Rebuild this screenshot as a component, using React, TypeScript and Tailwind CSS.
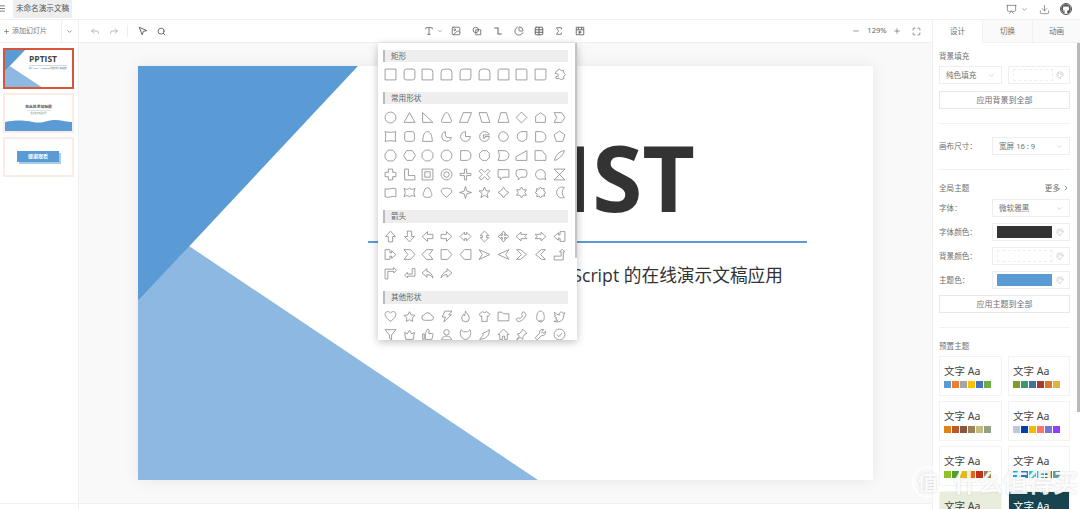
import React from 'react';
import {
  Menu, Plus, ChevronDown, ChevronRight, Reply, Forward, Search, Type, Image, ChartPie, Table, Sigma,
  Minus, Maximize, Palette, Presentation, Download,
} from 'lucide-react';
import { FaGithub } from 'react-icons/fa';

const rectShapes = [
  'M2 2h20v20H2z',
  'M6 2h12a4 4 0 0 1 4 4v12a4 4 0 0 1-4 4H6a4 4 0 0 1-4-4V6a4 4 0 0 1 4-4z',
  'M2 2h14a6 6 0 0 1 6 6v14H2z',
  'M8 2h8a6 6 0 0 1 6 6v14H2V8a6 6 0 0 1 6-6z',
  'M7 2h15v15a5 5 0 0 1-5 5H2V7a5 5 0 0 1 5-5z',
  'M8 2h8a6 6 0 0 1 6 6v14H2V8a6 6 0 0 1 6-6z',
  'M5 2h17v20H2V5a3 3 0 0 1 3-3z',
  'M2 2h17a3 3 0 0 1 3 3v17H2z',
  'M2 2h20v17a3 3 0 0 1-3 3H2z',
  'M7 5l5-3 3 3 4-1 1 5 3 3-3 3 0 5-6 1-3-2-5 1-1-4 5-1-1-4-5-1z',
];

const commonShapes = [
  'M12 2a10 10 0 1 0 0 20a10 10 0 1 0 0-20z',
  'M12 3l10 18H2z',
  'M3 3l19 18H3z',
  'M12 3c2 0 3 1 4 3l5 11c1 3 0 4-3 4H6c-3 0-4-1-3-4L8 6c1-2 2-3 4-3z',
  'M8 3h15l-7 18H1z',
  'M2 3h14l6 18H7z',
  'M7 3h10l5 18H2z',
  'M12 2l10 10-10 10L2 12z',
  'M12 3l9 7v11H3V10z',
  'M2 3h14l6 9-6 9H2l5-9z',

  'M2 3c3 1.500 17 1.500 20 0c-1.500 4-1.500 14 0 18c-3-1.500-17-1.500-20 0c1.500-4 1.500-14 0-18z',
  'M7 3h10a4 4 0 0 1 4 4v10a4 4 0 0 1-4 4H7a4 4 0 0 1-4-4V7a4 4 0 0 1 4-4z',
  'M12 3c6 0 8 6 9 18H3c1-12 3-18 9-18z',
  'M10 3a9 9 0 1 0 11 11h-6c-3 0-5-2-5-5z',
  'M12 3a9 9 0 1 0 9 9h-9z',
  'M12 3a9 9 0 1 0 9 9h-8v3h-3v-6h11a9 9 0 0 0-9-6z',
  'M12 3l6 3 3 6a9 9 0 1 1-9-9z',
  'M22 3v10a9 9 0 1 1-9-10z',
  'M3 3h9a10 10 0 0 1 10 10a9 9 0 0 1-9 9H3z',
  'M12 2l10 7-4 12H6L2 9z',

  'M8 2h8l6 7v7l-5 6H7l-5-6V9z',
  'M7 3h10l6 9-6 9H7l-6-9z',
  'M8 2h8l6 6v8l-6 6H8l-6-6V8z',
  'M12 2a10 10 0 1 0 0 20a10 10 0 1 0 0-20z',
  'M3 3h11a8 8 0 0 1 8 8v2a8 8 0 0 1-8 8H3z',
  'M8 3h8l5 5v8l-5 5H8l-5-5V8z',
  'M2 3h11c5 0 9 4 9 9s-4 9-9 9H2c3-5 3-13 0-18z',
  'M22 3v18H2v-7z',
  'M2 3l13 0 7 9v9H2z',
  'M3 21c0-8 10-18 18-18c0 6-12 18-18 18z',

  'M8 2h8v6h6v8h-6v6H8v-6H2V8h6z',
  'M3 2h7v12h12v8H3z',
  'M2 2h20v20H2zM7 7v10h10V7z',
  'M12 2a10 10 0 1 0 0 20a10 10 0 1 0 0-20zM12 7a5 5 0 1 0 0 10a5 5 0 1 0 0-10z',
  'M10 2h4v8h8v4h-8v8h-4v-8H2v-4h8z',
  'M6 2l6 6 6-6 4 4-6 6 6 6-4 4-6-6-6 6-4-4 6-6-6-6z',
  'M2 3h20v14H11l-5 5v-5H2z',
  'M7 3h10a5 5 0 0 1 5 5v4a5 5 0 0 1-5 5h-6l-5 5v-5a5 5 0 0 1-4-5V8a5 5 0 0 1 5-5z',
  'M12 3a9 9 0 1 0 4 17l6 1-2-5a9 9 0 0 0-8-13z',
  'M2 2h20L2 22h20z',

  'M2 5c6 3 14-3 20 0v15c-6-3-14 3-20 0z',
  'M2 4c3 3 6 3 10 0c4 3 7 3 10 0l-2 8 2 8c-3-3-6-3-10 0c-4-3-7-3-10 0l2-8z',
  'M12 3c4 0 5 4 7 9c2 4 2 9-7 9s-9-5-7-9c2-5 3-9 7-9z',
  'M12 21C6 16 2 12 2 9c0-3 4-5 10-5s10 2 10 5c0 3-4 7-10 12z',
  'M12 1l2.500 8.500L23 12l-8.500 2.500L12 23l-2.500-8.500L1 12l8.500-2.500z',
  'M12 2l3 7h7l-5.500 5 2 7.500L12 17l-6.500 4.500 2-7.500L2 9h7z',
  'M12 2l4 6 6 4-6 4-4 6-4-6-6-4 6-4z',
  'M12 2l3 5h6l-3 5 3 5h-6l-3 5-3-5H3l3-5-3-5h6z',
  'M12 2l2.500 3.500 4.500-1 -1 4.500L22 12l-3.500 2.500 1 4.500-4.500-1L12 22l-2.500-3.500-4.500 1 1-4.500L2 12l3.500-2.500-1-4.500 4.500 1z',
  'M21 3a10 10 0 1 0 0 18a12 12 0 0 1 0-18z',
];

const arrowShapes = [
  'M12 2l9 10h-5v10H8V12H3z',
  'M8 2h8v10h5l-9 10-9-10h5z',
  'M2 12l10-9v5h10v8H12v5z',
  'M22 12L12 3v5H2v8h10v5z',
  'M2 12l8-8v4h4V4l8 8-8 8v-4h-4v4z',
  'M12 2l8 8h-4v4h4l-8 8-8-8h4v-4H4z',
  'M12 2l4 5h-2v3h3V8l5 4-5 4v-2h-3v3h2l-4 5-4-5h2v-3H7v2l-5-4 5-4v2h3V7H8z',
  'M2 12l9-8v4h11l-4 4 4 4H11v4z',
  'M22 12l-9-8v4H2l4 4-4 4h11v4z',
  'M2 12l8-7v4h3V3h9v18h-9v-6h-3v4z',

  'M22 12l-8 7v-4h-3v6H2V3h9v6h3V5z',
  'M2 3h12l8 9-8 9H2l7-9z',
  'M22 3H10l-8 9 8 9h12l-7-9z',
  'M2 3h12l8 9-8 9H2z',
  'M22 3H10l-8 9 8 9h12z',
  'M2 3l20 9-20 9 6-9z',
  'M22 3L2 12l20 9-6-9z',
  'M3 3h7l11 9-11 9H3l9-9z',
  'M21 3h-7L3 12l11 9h7l-9-9z',
  'M2 22v-7h13V7h-3l5-5 5 5h-3v15z',

  'M2 22V4h16V1l5 5-5 5V8H7v14z',
  'M22 3v14H8v3l-5-5 5-5v3h9V3z',
  'M11 3L2 11l9 8v-5c5 0 8 2 11 6c-1-6-5-11-11-12z',
  'M13 3l9 8-9 8v-5c-5 0-8 2-11 6c1-6 5-11 11-12z',
];

const otherShapes = [
  'M12 21C5 16 2 12 2 8c0-3 2-5 5-5c2 0 4 1 5 3c1-2 3-3 5-3c3 0 5 2 5 5c0 4-3 8-10 13z',
  'M12 3l3 6 7 1-5 5 1 6-6-3-6 3 1-6-5-5 7-1z',
  'M7 19a5 5 0 0 1-1-10a7 7 0 0 1 13 1a4.500 4.500 0 0 1-1 9z',
  'M9 2h13l-6 7h5L7 22l3-9H4z',
  'M12 2c1 4 7 7 7 13a7 7 0 0 1-14 0c0-3 2-5 3-7c1 1 2 2 2 3c1-3 2-6 2-9z',
  'M8 3l4 2 4-2 6 5-3 4-2-1v10H7V11l-2 1-3-4z',
  'M2 4h7l3 3h10v13H2z',
  'M15 3l4 3c3 3-1 9-5 12-4 3-8 5-10 2l-2-3 5-3 2 2c2-1 4-3 5-6l-2-2z',
  'M12 2c5 0 7 6 7 12c0 5-3 8-7 8s-7-3-7-8c0-6 2-12 7-12zM9 20l6 0',
  'M22 5c-1 1-2 1-3 1c-1-2-3-3-5-2c-2 1-3 3-2 5c-4 0-7-2-9-5c-1 3 0 5 2 7l-2 0c0 2 2 4 4 4l-2 1c1 2 3 3 4 3c-2 1-4 2-7 2c8 3 18 0 18-12z',

  'M2 3h20l-8 10v9l-4-3v-6z',
  'M3 8l5 3 4-7 4 7 5-3-2 13H5z',
  'M8 10l4-8c2 0 3 1 3 3l-1 5h7c1 0 2 2 1 3l-2 8H8zM3 11h3v10H3z',
  'M12 3a5 5 0 1 0 0 10a5 5 0 1 0 0-10zM3 22c0-5 4-7 9-7s9 2 9 7z',
  'M4 3l4 4h8l4-4c2 4 2 7 1 10c-1 5-5 8-9 8s-8-3-9-8c-1-3-1-6 1-10z',
  'M21 3c0 9-4 15-12 17l-6 1 4-5c1-2 2-2 3-4l-2-2c4-1 8-3 13-7z',
  'M12 2L2 12h3v9h5v-6h4v6h5v-9h3z',
  'M14 2l8 8-3 1-4 5-1 5-4-4-7 5 5-7-4-4 5-1 4-5z',
  'M21 6l-4 4-3-3 4-4a6 6 0 0 0-8 7L2 18l4 4 8-8a6 6 0 0 0 7-8z',
  'M12 2a10 10 0 1 0 0 20a10 10 0 1 0 0-20zM7 12l4 4 6-7',
];

const themes = [
  { bg: 'bg-white', text: 'text-[#444444]', colors: ['#5b9bd5', '#ed7d31', '#a5a5a5', '#ffc000', '#4472c4', '#70ad47'] },
  { bg: 'bg-white', text: 'text-[#444444]', colors: ['#83992a', '#3c9670', '#44709d', '#a23b32', '#d87728', '#deb340'] },
  { bg: 'bg-white', text: 'text-[#444444]', colors: ['#e48312', '#bd582c', '#865640', '#9b8357', '#c2bc80', '#94a088'] },
  { bg: 'bg-white', text: 'text-[#444444]', colors: ['#bdc8df', '#003fa9', '#f5ba00', '#ff7567', '#7676d9', '#923ffc'] },
  { bg: 'bg-white', text: 'text-[#444444]', colors: ['#90c226', '#54a021', '#e6b91e', '#e76618', '#c42f19', '#918655'] },
  { bg: 'bg-white', text: 'text-[#444444]', colors: ['#1cade4', '#2683c6', '#27ced7', '#42ba97', '#3e8853', '#62a39f'] },
  { bg: 'bg-[#e9eddc]', text: 'text-[#444444]', colors: [] },
  { bg: 'bg-[#17444e]', text: 'text-white', colors: [] },
];

function ShapeGrid({ shapes }: { shapes: string[] }) {
  return (
    <div className="grid grid-cols-[repeat(10,18.8px)] auto-rows-[18.8px] ml-[2.9px]">
      {shapes.map((d, i) => (
        <div key={i} className="flex items-center justify-center">
          <svg viewBox="0 0 24 24" className="w-[13px] h-[13px]" fill="none" stroke="#8a8a8a" strokeWidth={1.5} strokeLinejoin="round">
            <path d={d} />
          </svg>
        </div>
      ))}
    </div>
  );
}

function ShapeTitle({ title, className }: { title: string; className: string }) {
  return (
    <div className={`ml-[5px] w-[185px] h-[12.5px] bg-[#eeeeee] border-l-2 border-[#bbbbbb] pl-[6px] text-[7.6px] leading-[12.5px] text-[#666666] ${className}`}>
      {title}
    </div>
  );
}

function ShapePanel() {
  return (
    <div className="absolute left-[299px] top-[23px] w-[199px] h-[297px] bg-white overflow-hidden pt-[6.5px] shadow-[0_2px_8px_rgba(0,0,0,0.25)] z-10">
      <ShapeTitle title="矩形" className="" />
      <div className="mt-[3px]"><ShapeGrid shapes={rectShapes} /></div>
      <ShapeTitle title="常用形状" className="mt-[8px]" />
      <div className="mt-[4px]"><ShapeGrid shapes={commonShapes} /></div>
      <ShapeTitle title="箭头" className="mt-[8px]" />
      <div className="mt-[4px]"><ShapeGrid shapes={arrowShapes} /></div>
      <ShapeTitle title="其他形状" className="mt-[8px]" />
      <div className="mt-[3px]"><ShapeGrid shapes={otherShapes} /></div>
      <div className="absolute right-0 top-0 w-[2.5px] h-[215px] bg-[#c4c4c4]" />
    </div>
  );
}

function Slide() {
  return (
    <div className="relative w-[735px] h-[414px] bg-white shadow-[0_0_15px_rgba(0,0,0,0.08)] overflow-hidden">
      <svg viewBox="0 0 735 414" className="absolute inset-0 w-full h-full">
        <polygon points="51,180 400,414 0,414 0,235" fill="#8cb8e2" />
        <polygon points="0,0 220,0 0,235" fill="#5b9bd5" />
      </svg>
      <div className="absolute right-[178px] top-[57px] text-[91px] leading-[1.2] font-bold text-[#333333] font-['Open_Sans',sans-serif] whitespace-nowrap">PPTIST</div>
      <div className="absolute left-[230px] top-[174.500px] w-[439px] h-[2px] bg-[#5b9bd5]" />
      <div className="absolute right-[90px] top-[196px] text-[17.700px] leading-[26px] text-[#333333] font-['Open_Sans','Noto_Sans_CJK_SC',sans-serif] whitespace-nowrap">基于 Vue 3.x + TypeScript 的在线演示文稿应用</div>
    </div>
  );
}

function Thumbnails() {
  return (
    <div className="flex flex-col gap-[4px] pl-[3px] pt-[5px]">
      <div className="relative w-[71px] h-[41px] border-2 border-[#d9553a] overflow-hidden bg-white">
        <svg viewBox="0 0 735 414" preserveAspectRatio="none" className="absolute inset-0 w-full h-full">
          <polygon points="51,180 400,414 0,414 0,235" fill="#8cb8e2" />
          <polygon points="0,0 220,0 0,235" fill="#5b9bd5" />
        </svg>
        <div className="absolute left-[24px] top-[3px] text-[8.500px] leading-[11px] font-bold text-[#444444] font-['Open_Sans',sans-serif]">PPTIST</div>
        <div className="absolute left-[24px] top-[15px] w-[38px] h-px bg-[#c5daef]" />
        <div className="absolute left-[24px] top-[17px] text-[1.800px] leading-[3px] text-[#555555] whitespace-nowrap">基于 Vue 3.x + TypeScript 的在线演示文稿应用</div>
      </div>
      <div className="relative w-[71px] h-[40px] border-2 border-[#fcebe6] overflow-hidden bg-white">
        <div className="absolute inset-x-0 top-[9px] text-center text-[3.800px] leading-[6px] font-bold text-[#555555]">在此处添加标题</div>
        <div className="absolute left-[22px] top-[15px] w-[24px] h-px bg-[#d5e4f3]" />
        <div className="absolute inset-x-0 top-[17px] text-center text-[2px] leading-[3px] text-[#777777]">在此处添加副标题</div>
        <svg viewBox="0 0 67 12" preserveAspectRatio="none" className="absolute left-0 bottom-0 w-full h-[12px]">
          <path d="M0 3C10 1 18 1 28 3C38 5 42 1 50 1C56 1 62 3 67 3V12H0z" fill="#5b9bd5" />
        </svg>
      </div>
      <div className="relative w-[71px] h-[40px] border-2 border-[#fcebe6] overflow-hidden bg-white flex items-center justify-center">
        <div className="relative w-[42px] h-[11px] mr-[1px] -mt-[1px] bg-[#5b9bd5] shadow-[2px_2px_0_#a9cbea] flex items-center justify-center text-[5px] font-bold text-white">感谢观看</div>
      </div>
    </div>
  );
}

function PaletteIcon() {
  return <Palette className="w-[8px] h-[8px] text-[#bbbbbb]" strokeWidth={1.500} />;
}

function Box({ className, children }: { className: string; children?: React.ReactNode }) {
  return <div className={`h-[18px] border border-[#eeeeee] flex items-center ${className}`}>{children}</div>;
}

function SelectBox({ label, className }: { label: string; className: string }) {
  return (
    <Box className={`pl-[6px] pr-[6px] justify-between ${className}`}>
      <span>{label}</span>
      <ChevronDown className="w-[7px] h-[7px] text-[#bbbbbb]" />
    </Box>
  );
}

function ColorRow({ label, swatch }: { label: string; swatch: string }) {
  return (
    <div className="flex items-center justify-between mt-[6px]">
      <span>{label}</span>
      <Box className="w-[78px] pl-[4px] pr-[5px] justify-between">
        <div className={`w-[55px] h-[12px] ${swatch}`} />
        <PaletteIcon />
      </Box>
    </div>
  );
}

function Divider({ className }: { className: string }) {
  return <div className={`h-px bg-[#f2f2f2] ${className}`} />;
}

function ActionButton({ label, className }: { label: string; className: string }) {
  return <div className={`h-[18px] border border-[#e8e8e8] flex items-center justify-center text-[8px] ${className}`}>{label}</div>;
}

function RightPanel() {
  return (
    <div className="relative w-[148px] shrink-0 h-full bg-white border-l border-[#f0f0f0] overflow-hidden text-[7.6px] leading-[12px] text-[#707070]">
      <div className="flex h-[23px] text-center leading-[23px]">
        <div className="w-[49px] bg-white">设计</div>
        <div className="w-[50px] bg-[#fafafa] border-b border-l border-[#f0f0f0]">切换</div>
        <div className="flex-1 bg-[#fafafa] border-b border-l border-[#f0f0f0]">动画</div>
      </div>
      <div className="pl-[6px] pr-[10px]">
        <div className="mt-[7px]">背景填充</div>
        <div className="flex justify-between mt-[4px]">
          <SelectBox label="纯色填充" className="w-[63px]" />
          <Box className="w-[62px] pl-[4px] pr-[5px] justify-between">
            <div className="w-[40px] h-[12px] border border-dashed border-[#eeeeee]" />
            <PaletteIcon />
          </Box>
        </div>
        <ActionButton label="应用背景到全部" className="mt-[7px]" />
        <Divider className="mt-[14px]" />
        <div className="flex items-center justify-between mt-[13px]">
          <span>画布尺寸：</span>
          <SelectBox label="宽屏 16 : 9" className="w-[78px]" />
        </div>
        <Divider className="mt-[14px]" />
        <div className="flex items-center justify-between mt-[12px]">
          <span>全局主题</span>
          <span className="flex items-center">更多<ChevronRight className="w-[8px] h-[8px] ml-[2px] text-[#555555]" /></span>
        </div>
        <div className="flex items-center justify-between mt-[5px]">
          <span>字体：</span>
          <SelectBox label="微软雅黑" className="w-[78px]" />
        </div>
        <ColorRow label="字体颜色：" swatch="bg-[#333333]" />
        <ColorRow label="背景颜色：" swatch="bg-white border border-dashed border-[#eeeeee]" />
        <ColorRow label="主题色：" swatch="bg-[#5b9bd5]" />
        <ActionButton label="应用主题到全部" className="mt-[6px]" />
        <Divider className="mt-[14px]" />
        <div className="mt-[12px]">预置主题</div>
        <div className="grid grid-cols-[63px_62px] gap-x-[6px] gap-y-[5px] mt-[4px]">
          {themes.map((t, i) => (
            <div key={i} className={`h-[40px] border border-[#f2f2f2] pl-[4px] pt-[7px] ${t.bg} ${t.text}`}>
              <div className="text-[10.500px] leading-[14px]">文字 Aa</div>
              <div className="flex gap-[1.300px] mt-[2.500px]">
                {t.colors.map((c) => (
                  <div key={c} className="w-[6.700px] h-[7px]" style={{ backgroundColor: c }} />
                ))}
              </div>
            </div>
          ))}
        </div>
      </div>
      <div className="absolute right-0 top-[23px] w-[3px] h-[369px] bg-[#b9b9b9]" />
    </div>
  );
}

function Watermark() {
  return (
    <div className="absolute left-[912px] top-[466px] z-20 flex items-center gap-[9px] text-white/90 font-bold whitespace-nowrap [text-shadow:0_0_2px_rgba(0,0,0,0.18)]">
      <div className="w-[32px] h-[32px] rounded-full border-2 border-white/80 flex items-center justify-center text-[21px] leading-none">值</div>
      <div className="text-[25px] leading-none">什么值得买</div>
    </div>
  );
}

const iconClass = 'w-[10px] h-[10px] text-[#666666]';

export default function App() {
  return (
    <div className="relative w-[1080px] h-[509px] overflow-hidden bg-white font-['Noto_Sans','Noto_Sans_CJK_SC',sans-serif]">
      <div className="h-5 flex items-start border-b border-[#f0f0f0] text-[7.6px] text-[#555555]">
        <Menu className="w-[9px] h-[9px] -ml-[3px] mt-[4px] text-[#555555]" />
        <div className="ml-[7px] h-[18px] w-[59px] bg-[#eeeeee] flex items-center justify-center">未命名演示文稿</div>
        <div className="flex-1" />
        <div className="flex items-center mt-[3px] mr-[8px] text-[#666666]">
          <Presentation className="w-[11px] h-[11px]" strokeWidth={1.500} />
          <ChevronDown className="w-[7px] h-[7px] ml-[4px] mr-[11px]" />
          <Download className="w-[11px] h-[11px] mr-[10px]" strokeWidth={1.500} />
          <div className="w-[12px] h-[12px] rounded-full border border-[#555555] flex items-center justify-center">
            <FaGithub className="w-[10px] h-[10px] text-[#555555]" />
          </div>
        </div>
      </div>
      <div className="flex h-[489px]">
        <div className="w-[79px] shrink-0 border-r border-[#f0f0f0] flex flex-col">
          <div className="h-[23px] flex items-center border-b border-[#f0f0f0] text-[7px] text-[#777777]">
            <div className="w-[62px] h-full flex items-center border-r border-[#f0f0f0] pl-[3px]">
              <Plus className="w-[7px] h-[7px] mr-[2px] text-[#555555]" />添加幻灯片
            </div>
            <ChevronDown className="w-[7px] h-[7px] ml-[4px] text-[#555555]" />
          </div>
          <div className="flex-1"><Thumbnails /></div>
          <div className="h-[6px] border-t border-[#f0f0f0]" />
        </div>
        <div className="relative flex-1 flex flex-col min-w-0">
          <div className="h-[23px] flex items-center border-b border-[#f0f0f0] bg-white text-[7.6px] text-[#666666]">
            <Reply className="w-[10px] h-[10px] ml-[11px] text-[#aaaaaa]" />
            <Forward className="w-[10px] h-[10px] ml-[9px] text-[#aaaaaa]" />
            <div className="w-px h-[12px] bg-[#eeeeee] ml-[8px]" />
            <svg viewBox="0 0 24 24" className="w-[10px] h-[10px] ml-[10px]" fill="none" stroke="#555555" strokeWidth={2.200} strokeLinejoin="round"><path d="M3 3l18 8-8 2-3 8z" /></svg>
            <Search className="w-[9px] h-[9px] ml-[9px] text-[#555555]" strokeWidth={2.200} />
            <Type className={`${iconClass} ml-[258px]`} />
            <ChevronDown className="w-[6px] h-[6px] ml-[3px] text-[#666666]" />
            <Image className={`${iconClass} ml-[8px]`} />
            <svg viewBox="0 0 24 24" className={`${iconClass} ml-[11px]`} fill="none" stroke="currentColor" strokeWidth={2}><path d="M9 3a6.500 6.500 0 1 0 0 13a6.500 6.500 0 1 0 0-13zM9 9h12v12H9z" /></svg>
            <svg viewBox="0 0 24 24" className={`${iconClass} ml-[11px]`} fill="none" stroke="currentColor" strokeWidth={2.500}><path d="M3 5h9v14h9" /></svg>
            <ChartPie className={`${iconClass} ml-[11px]`} />
            <Table className={`${iconClass} ml-[10px]`} strokeWidth={2.400} />
            <Sigma className={`${iconClass} ml-[10px]`} />
            <svg viewBox="0 0 24 24" className={`${iconClass} ml-[11px]`} fill="none" stroke="currentColor" strokeWidth={2.200} strokeLinejoin="round"><path d="M3 3h18v18H3zM3 9h18M8 3v6M16 3v6" /><path d="M10 12l5 3-5 3z" fill="currentColor" /></svg>
            <Minus className="w-[8px] h-[8px] ml-[267px] text-[#666666]" />
            <span className="w-[28px] text-center ml-[3px]">129%</span>
            <Plus className="w-[8px] h-[8px] ml-[2px] text-[#666666]" />
            <Maximize className="w-[9px] h-[9px] ml-[11px] text-[#666666]" />
          </div>
          <div className="flex-1 bg-[#f9f9f9] flex items-center justify-center">
            <Slide />
          </div>
          <div className="h-[6px] border-t border-[#f0f0f0] bg-white" />
          <ShapePanel />
        </div>
        <RightPanel />
      </div>
      <Watermark />
    </div>
  );
}
